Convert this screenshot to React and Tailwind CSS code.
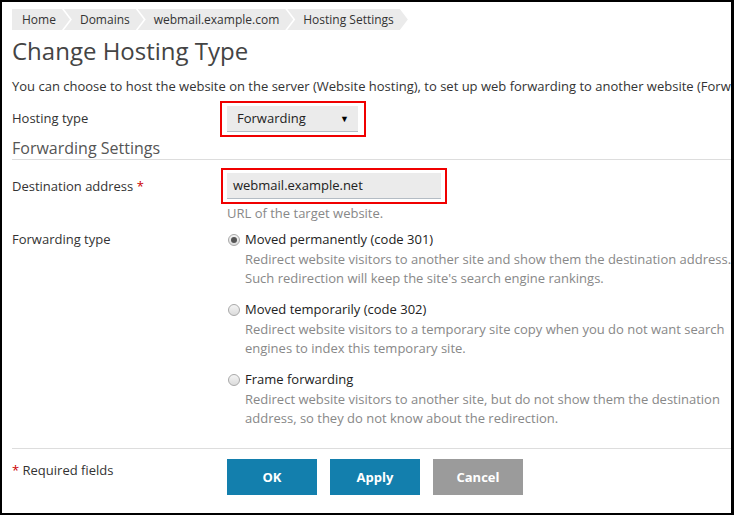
import React from "react";

const crumbs = ["Home", "Domains", "webmail.example.com", "Hosting Settings"];

const options = [
  {
    label: "Moved permanently (code 301)",
    checked: true,
    lines: [
      "Redirect website visitors to another site and show them the destination address.",
      "Such redirection will keep the site's search engine rankings.",
    ],
  },
  {
    label: "Moved temporarily (code 302)",
    lines: [
      "Redirect website visitors to a temporary site copy when you do not want search",
      "engines to index this temporary site.",
    ],
  },
  {
    label: "Frame forwarding",
    lines: [
      "Redirect website visitors to another site, but do not show them the destination",
      "address, so they do not know about the redirection.",
    ],
  },
];

function Radio({ checked }) {
  return (
    <span className="w-[12px] h-[12px] rounded-full border border-[#a9a9a9] bg-gradient-to-b from-[#f4f4f4] to-[#dcdcdc] flex items-center justify-center shrink-0">
      {checked && <span className="w-[6px] h-[6px] rounded-full bg-[#555]" />}
    </span>
  );
}

export default function App() {
  return (
    <div className="w-[734px] h-[515px] bg-white border-t-2 border-l-2 border-b-2 border-r-[3px] border-black overflow-hidden font-['Open_Sans',sans-serif] text-[13px] leading-[19px] text-[#333]">
      <div className="pl-[10px] pt-[7px]">
        {/* breadcrumbs */}
        <div className="flex text-[12px]">
          {crumbs.map((c, i) => (
            <div
              key={c}
              className={`h-[21px] flex items-center bg-[#ebebeb] text-[#333] whitespace-nowrap pr-[14px] ${
                i === 0
                  ? "pl-[10px] [clip-path:polygon(0_0,calc(100%-8px)_0,100%_50%,calc(100%-8px)_100%,0_100%)]"
                  : "pl-[16px] -ml-[6px] [clip-path:polygon(0_0,calc(100%-8px)_0,100%_50%,calc(100%-8px)_100%,0_100%,8px_50%)]"
              }`}
            >
              {c}
            </div>
          ))}
        </div>

        <h1 className="mt-[6px] text-[24px] leading-[30px] text-[#444] font-normal">Change Hosting Type</h1>

        <p className="mt-[11px] whitespace-nowrap">
          You can choose to host the website on the server (Website hosting), to set up web forwarding to another website (Forwarding), or to disable hosting (No hosting).
        </p>

        {/* hosting type */}
        <div className="mt-[5px] flex items-center">
          <div className="w-[208px] shrink-0 -mt-[2px]">Hosting type</div>
          <div className="border-2 border-[#f00000] pl-[5px] pr-[6px] py-[3px]">
            <div className="w-[131px] h-[26px] bg-[#ebebeb] border-b border-[#b4bcc4] flex items-center justify-between pl-[10px] pr-[9px] text-[13px] text-[#222]">
              <span>Forwarding</span>
              <span className="text-[9px] text-black">▼</span>
            </div>
          </div>
        </div>

        <div className="text-[16px] leading-[22px] text-[#555] border-b border-[#ddd]">Forwarding Settings</div>

        {/* destination */}
        <div className="mt-[8px] flex items-center">
          <div className="w-[209px] shrink-0">
            Destination address <span className="text-[#c00]">*</span>
          </div>
          <div className="border-2 border-[#f00000] px-[4px] py-[3px]">
            <div className="w-[214px] h-[26px] bg-[#ebebeb] border-b border-[#b4bcc4] flex items-center pl-[6px] text-[13px] text-[#222]">
              webmail.example.net
            </div>
          </div>
        </div>
        <div className="pl-[215px] text-[#888]">URL of the target website.</div>

        {/* forwarding type */}
        <div className="mt-[7px] flex">
          <div className="w-[216px] shrink-0">Forwarding type</div>
          <div className="flex flex-col gap-[12px]">
            {options.map((o) => (
              <div key={o.label}>
                <div className="flex items-center gap-[5px] text-[#222]">
                  <Radio checked={o.checked} />
                  <span>{o.label}</span>
                </div>
                <div className="mt-[1px] pl-[17px] text-[#888] whitespace-nowrap">
                  {o.lines.map((l) => (
                    <div key={l}>{l}</div>
                  ))}
                </div>
              </div>
            ))}
          </div>
        </div>

        <div className="mt-[20px] h-px bg-[#ddd]" />

        {/* footer */}
        <div className="mt-[10px] flex items-start">
          <div className="w-[215px] shrink-0 pt-[2px]">
            <span className="text-[#c00]">*</span> Required fields
          </div>
          <div className="flex gap-[13px]">
            <button className="w-[90px] h-[36px] bg-[#137fad] text-white font-bold">OK</button>
            <button className="w-[90px] h-[36px] bg-[#137fad] text-white font-bold">Apply</button>
            <button className="w-[90px] h-[36px] bg-[#9b9b9b] text-white font-bold">Cancel</button>
          </div>
        </div>
      </div>
    </div>
  );
}
